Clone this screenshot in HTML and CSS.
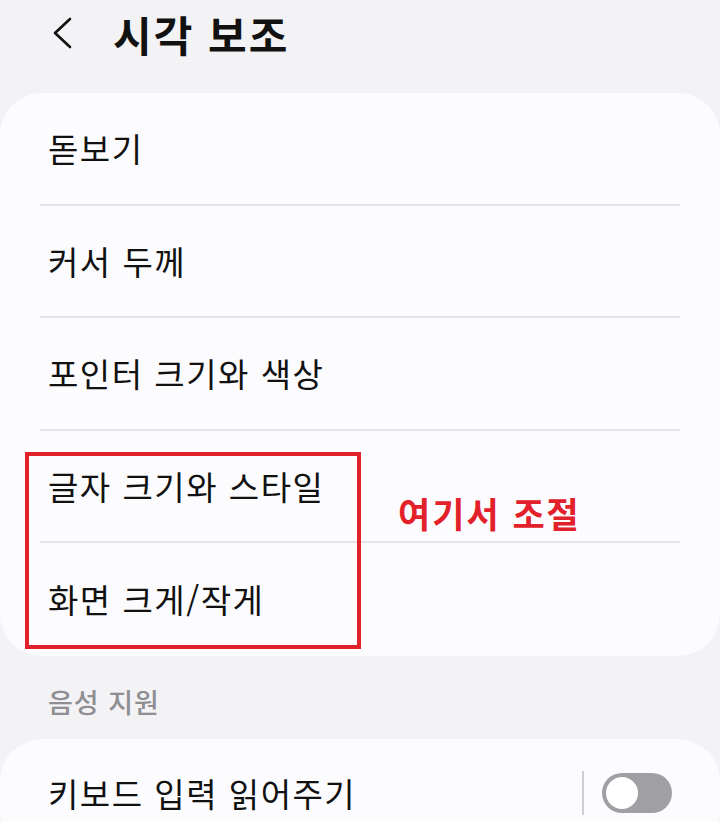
FILE: index.html
```html
<!DOCTYPE html>
<html lang="ko">
<head>
    <meta charset="UTF-8">
    <meta name="viewport" content="width=device-width, initial-scale=1.0">
    <title>시각 보조</title>
    <link rel="stylesheet" href="styles.css">
</head>
<body>
    <div class="screen">
        <!-- 상단 제목 -->
        <header class="topbar">
            <span class="back">
                <svg width="24" height="32" viewBox="0 0 24 32">
                    <path d="M20 2 L5 16 L20 30" fill="none" stroke="#111" stroke-width="2.6" stroke-linecap="round" stroke-linejoin="round"/>
                </svg>
            </span>
            <h1>시각 보조</h1>
        </header>

        <!-- 표시 관련 메뉴 -->
        <section class="card">
            <div class="row">돋보기</div>
            <div class="row">커서 두께</div>
            <div class="row">포인터 크기와 색상</div>
            <div class="row">글자 크기와 스타일</div>
            <div class="row last">화면 크게/작게</div>

            <div class="mark"></div>
            <span class="note">여기서 조절</span>
        </section>

        <div class="section-title">음성 지원</div>

        <section class="card">
            <div class="row toggle-row">
                <span>키보드 입력 읽어주기</span>
                <span class="switch-wrap">
                    <span class="sep"></span>
                    <span class="switch"><span class="knob"></span></span>
                </span>
            </div>
        </section>
    </div>
</body>
</html>
```

FILE: styles.css
```css
* {
    margin: 0;
    padding: 0;
    box-sizing: border-box;
}

body {
    font-family: "Noto Sans CJK KR", "Noto Sans", sans-serif;
    background-color: #f3f3f5;
    color: #111;
    overflow: hidden;
}

.screen {
    width: 720px;
    height: 821px;
}

.topbar {
    height: 93px;
    display: flex;
    align-items: center;
    padding-left: 50px;
    padding-bottom: 27px;
}

.back {
    display: flex;
    width: 63px;
}

.topbar h1 {
    font-size: 42px;
    font-weight: 700;
    letter-spacing: 2px;
    color: #111;
}

.card {
    position: relative;
    background-color: #fcfcfe;
    border-radius: 42px;
    padding: 0 40px;
}

.row {
    height: 112.5px;
    display: flex;
    align-items: center;
    padding-left: 8px;
    font-size: 33px;
    letter-spacing: 1.5px;
    border-bottom: 2px solid #e4e4e8;
}

.row.last {
    border-bottom: none;
}

/* 강조 표시 */
.mark {
    position: absolute;
    left: 25px;
    top: 359px;
    width: 336px;
    height: 197px;
    border: 4px solid #e3212b;
}

.note {
    position: absolute;
    left: 398px;
    top: 394px;
    font-size: 35px;
    font-weight: 700;
    color: #e3212b;
    letter-spacing: 2px;
}

.section-title {
    height: 83px;
    display: flex;
    align-items: center;
    padding-left: 48px;
    padding-top: 8px;
    font-size: 27px;
    font-weight: 500;
    letter-spacing: 1px;
    color: #8e8e93;
}

.toggle-row {
    justify-content: space-between;
    align-items: flex-start;
    padding-top: 30px;
    border-bottom: none;
}

.switch-wrap {
    display: flex;
    align-items: center;
    gap: 18px;
    margin-right: 8px;
    margin-top: 2px;
}

.sep {
    width: 2px;
    height: 44px;
    background-color: #cfcfd3;
}

.switch {
    width: 70px;
    height: 40px;
    border-radius: 20px;
    background-color: #a0a0a4;
    display: flex;
    align-items: center;
    padding-left: 4px;
}

.knob {
    width: 32px;
    height: 32px;
    border-radius: 50%;
    background-color: #fff;
}
```
